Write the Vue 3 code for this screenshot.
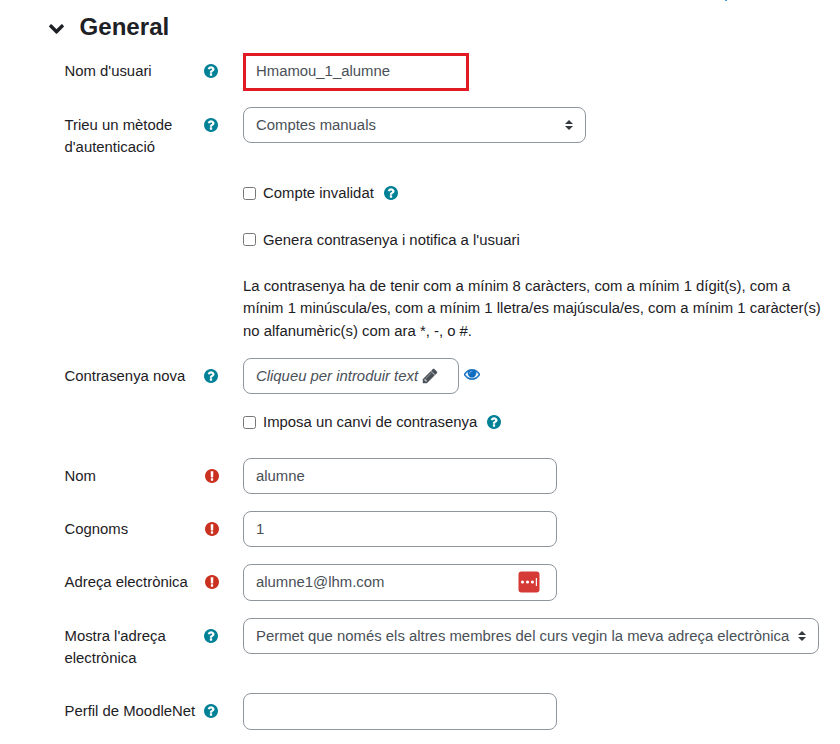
<script setup>
import { reactive } from 'vue'

const icons = {
  help: {
    box: '128 128 1536 1536',
    d: 'M1024 1376v-192q0-14-9-23t-23-9h-192q-14 0-23 9t-9 23v192q0 14 9 23t23 9h192q14 0 23-9t9-23zm256-672q0-88-55.5-163t-138.5-116-170-41q-243 0-371 213-15 24 8 42l132 100q7 6 19 6 16 0 25-12 53-68 86-92 34-24 86-24 48 0 85.5 26t37.5 59q0 38-20 61t-68 45q-63 28-115.5 86.5t-52.5 125.5v36q0 14 9 23t23 9h192q14 0 23-9t9-23q0-19 21.5-49.5t54.5-49.5q32-18 49-28.5t46-35 44.5-48 28-60.5 12.5-81zm384 192q0 209-103 385.5t-279.5 279.5-385.5 103-385.5-103-279.5-279.5-103-385.5 103-385.5 279.5-279.5 385.5-103 385.5 103 279.5 279.5 103 385.5z',
  },
  required: {
    box: '128 128 1536 1536',
    d: 'M896 128q209 0 385.5 103t279.5 279.5 103 385.5-103 385.5-279.5 279.5-385.5 103-385.5-103-279.5-279.5-103-385.5 103-385.5 279.5-279.5 385.5-103zm128 1247v-190q0-14-9-23.5t-22-9.5h-192q-13 0-23 10t-10 23v190q0 13 10 23t23 10h192q13 0 22-9.5t9-23.5zm-2-344l18-621q0-12-10-18-10-8-24-8h-220q-14 0-24 8-10 6-10 18l17 621q0 10 10 17.5t24 7.5h185q14 0 23.5-7.5t10.5-17.5z',
  },
}

const form = reactive({
  username: 'Hmamou_1_alumne',
  suspended: false,
  generate: false,
  force: false,
  firstname: 'alumne',
  lastname: '1',
  email: 'alumne1@lhm.com',
  moodlenet: '',
})

const rows = [
  { key: 'username', label: "Nom d'usuari", icon: 'help', kind: 'input' },
  { key: 'auth', label: "Trieu un mètode d'autenticació", icon: 'help', kind: 'select', value: 'Comptes manuals' },
  { key: 'suspended', kind: 'check', text: 'Compte invalidat', help: true },
  { key: 'generate', kind: 'check', text: "Genera contrasenya i notifica a l'usuari" },
  { key: 'policy', kind: 'note', text: 'La contrasenya ha de tenir com a mínim 8 caràcters, com a mínim 1 dígit(s), com a mínim 1 minúscula/es, com a mínim 1 lletra/es majúscula/es, com a mínim 1 caràcter(s) no alfanumèric(s) com ara *, -, o #.' },
  { key: 'password', label: 'Contrasenya nova', icon: 'help', kind: 'password' },
  { key: 'force', kind: 'check', text: 'Imposa un canvi de contrasenya', help: true },
  { key: 'firstname', label: 'Nom', icon: 'required', kind: 'input' },
  { key: 'lastname', label: 'Cognoms', icon: 'required', kind: 'input' },
  { key: 'email', label: 'Adreça electrònica', icon: 'required', kind: 'input' },
  { key: 'maildisplay', label: "Mostra l'adreça electrònica", icon: 'help', kind: 'select', value: 'Permet que només els altres membres del curs vegin la meva adreça electrònica' },
  { key: 'moodlenet', label: 'Perfil de MoodleNet', icon: 'help', kind: 'input' },
]
</script>

<template>
  <main class="page">
    <span class="link-edge"></span>
    <header class="heading">
      <svg class="chevron" viewBox="90 533 1612 1035"><path d="M1683 808l-742 741q-19 19-45 19t-45-19l-742-741q-19-19-19-45.5t19-45.5l166-165q19-19 45-19t45 19l531 531 531-531q19-19 45-19t45 19l166 165q19 19 19 45.5t-19 45.5z" /></svg>
      <h3>General</h3>
    </header>
    <form class="rows" @submit.prevent>
      <div v-for="row in rows" :key="row.key" class="row" :class="row.key">
        <label class="label">{{ row.label }}</label>
        <div class="mark">
          <svg v-if="row.icon" class="icon" :class="row.icon" :viewBox="icons[row.icon].box"><path :d="icons[row.icon].d" /></svg>
        </div>
        <div class="field">
          <div v-if="row.kind === 'input'" class="input-wrap">
            <input v-model="form[row.key]" class="control" type="text" spellcheck="false" />
            <svg v-if="row.key === 'email'" class="manager" viewBox="0 0 22 22">
              <rect x=".5" y=".5" width="21" height="21" rx="3" fill="#d63a37" />
              <g fill="#fff">
                <circle cx="4.5" cy="11" r="1.6" /><circle cx="9.5" cy="11" r="1.6" /><circle cx="14.4" cy="11" r="1.6" />
                <rect x="17.8" y="7" width="1.2" height="8" />
              </g>
            </svg>
          </div>
          <div v-else-if="row.kind === 'select'" class="control select">
            <span>{{ row.value }}</span>
            <svg class="arrows" viewBox="0 0 8 10"><path d="M0 4L4 0l4 4zM0 6h8l-4 4z" /></svg>
          </div>
          <label v-else-if="row.kind === 'check'" class="check">
            <input v-model="form[row.key]" type="checkbox" />
            <span>{{ row.text }}</span>
            <svg v-if="row.help" class="icon help" :viewBox="icons.help.box"><path :d="icons.help.d" /></svg>
          </label>
          <p v-else-if="row.kind === 'note'" class="note">{{ row.text }}</p>
          <template v-else>
            <div class="control reveal">
              <em>Cliqueu per introduir text</em>
              <svg class="pencil" viewBox="128 149 1515 1515"><path d="M491 1536l91-91-235-235-91 91v107h128v128h107zm523-928q0-22-22-22-10 0-17 7l-542 542q-7 7-7 17 0 22 22 22 10 0 17-7l542-542q7-7 7-17zm-54-192l416 416-832 832h-416v-416zm683 96q0 53-37 90l-166 166-416-416 166-165q36-38 90-38 53 0 91 38l235 234q37 39 37 91z" /></svg>
            </div>
            <svg class="eye" viewBox="0 384 1792 1152"><path d="M1664 960q-152-236-381-353 61 104 61 225 0 185-131.5 316.5t-316.5 131.5-316.5-131.5-131.5-316.5q0-121 61-225-229 117-381 353 133 205 333.5 326.5t434.5 121.5 434.5-121.5 333.5-326.5zm-720-384q0-20-14-34t-34-14q-125 0-214.5 89.5t-89.5 214.5q0 20 14 34t34 14 34-14 14-34q0-86 61-147t147-61q20 0 34-14t14-34zm848 384q0 34-20 69-140 230-376.5 368.5t-499.5 138.5-499.5-139-376.5-368q-20-35-20-69t20-69q140-229 376.5-368t499.5-139 499.5 139 376.5 368q20 35 20 69z" /></svg>
          </template>
        </div>
      </div>
    </form>
  </main>
</template>

<style>
body {
  margin: 0;
  background: #fff;
}
</style>

<style scoped>
* {
  box-sizing: border-box;
}
.page {
  position: relative;
  width: 840px;
  height: 744px;
  overflow: hidden;
  font: 14.88px/22.5px "Liberation Sans", Arial, sans-serif;
  color: #1d2125;
}
.link-edge {
  position: absolute;
  left: 725px;
  top: 0;
  width: 2px;
  height: 1px;
  background: #4a9de0;
}
.heading {
  display: flex;
  align-items: center;
  gap: 15.5px;
  height: 53px;
  padding-left: 49px;
}
.heading h3 {
  margin: 0;
  font-size: 24.1px;
  line-height: 30px;
  font-weight: 700;
}
.chevron {
  width: 15px;
  height: 10px;
  margin-top: 4px;
  fill: #1d2125;
}
.rows {
  display: grid;
  grid-template-rows: 54px 75px 47px 46px 83px 53px 47px 53px 53px 54px 75px 51px;
}
.row {
  display: grid;
  grid-template-columns: 139.5px 39px 590px;
  padding-left: 64.5px;
}
.label {
  width: 134px;
  padding-top: 7px;
  line-height: 22px;
}
.mark {
  padding-top: 11px;
}
.icon {
  display: block;
  width: 14px;
  height: 14px;
  flex: none;
}
.required {
  margin-left: 1px;
  fill: #ca3120;
}
.help {
  fill: #008196;
}
.field {
  display: flex;
  align-items: flex-start;
}
.input-wrap {
  position: relative;
  width: 314px;
}
.control {
  display: flex;
  align-items: center;
  width: 100%;
  height: 36px;
  margin: 0;
  padding: 0 12px;
  border: 1px solid #8f959e;
  border-radius: 8px;
  background: #fff;
  color: #495057;
  font: inherit;
  white-space: nowrap;
}
.username .input-wrap {
  width: 226px;
}
.username .control {
  height: 38px;
  padding: 0 10px 3px;
  border: 3px solid #e01b24;
  border-radius: 0;
}
.select {
  justify-content: space-between;
  width: 576px;
}
.auth .select {
  width: 343px;
}
.arrows {
  width: 8px;
  height: 10px;
  fill: #343a40;
}
.email .control,
.moodlenet .control {
  height: 37px;
  padding-bottom: 2px;
}
.manager {
  position: absolute;
  left: 275px;
  top: 7px;
  width: 22px;
  height: 22px;
}
.check {
  display: flex;
  align-items: center;
  height: 22px;
}
.check input {
  width: 13px;
  height: 13px;
  margin: 0 7px 0 0;
}
.generate .check input {
  margin-top: -1px;
}
.check .icon {
  margin-left: 10px;
}
.note {
  width: 582px;
  margin: 0;
  line-height: 22.3px;
}
.reveal {
  width: 216px;
}
.pencil {
  width: 14px;
  height: 14px;
  margin: -1px 0 0 5px;
  fill: #495057;
  stroke: #495057;
  stroke-width: 50;
  overflow: visible;
}
.eye {
  width: 16px;
  height: 11px;
  margin: 11px 0 0 4.5px;
  fill: #0f6cbf;
  stroke: #0f6cbf;
  stroke-width: 60;
}
</style>
